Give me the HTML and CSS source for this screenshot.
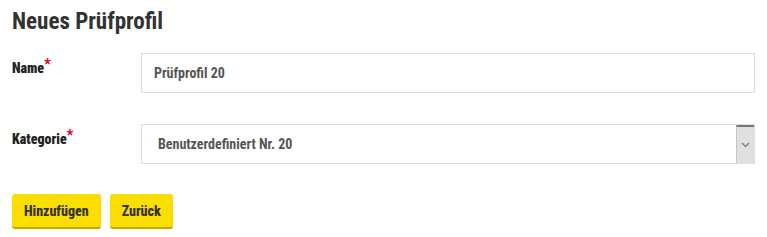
FILE: index.html
```html
<!DOCTYPE html>
<html>
    <head>
        <title>Neues Prüfprofil</title>
        <link rel="stylesheet" href="styles.css">
    </head>
    <body>
        <div class="container">
            <h1>Neues Prüfprofil</h1>
            <div class="form-row">
                <label for="name">Name<span class="required">*</span></label>
                <input type="text" id="name" value="Prüfprofil 20" />
            </div>
            <div class="form-row">
                <label for="category">Kategorie<span class="required">*</span></label>
                <div class="select-box">
                    <span class="select-value">Benutzerdefiniert Nr. 20</span>
                    <span class="select-arrow">
                        <svg width="9" height="6" viewBox="0 0 9 6"><path d="M1 1 L4.5 4.5 L8 1" fill="none" stroke="#777" stroke-width="1.2"/></svg>
                    </span>
                </div>
            </div>
            <div class="actions">
                <button class="btn">Hinzufügen</button>
                <button class="btn">Zurück</button>
            </div>
        </div>
    </body>
</html>
```

FILE: styles.css
```css
* {
    box-sizing: border-box;
}

body {
    font-family: 'Roboto Condensed', 'Liberation Sans Narrow', Roboto, Arial, sans-serif;
    font-stretch: 80%;
    margin: 0;
    padding: 0;
    color: #333;
    background: #fff;
}

.container {
    padding: 10px 12px 0 12px;
}

h1 {
    font-size: 23px;
    font-weight: bold;
    margin: 0 0 19px 0;
    line-height: 24px;
    color: #333;
}

.form-row {
    display: grid;
    grid-template-columns: 129px 614px;
    align-items: start;
    margin-bottom: 31px;
}

.form-row label {
    font-weight: 900;
    font-size: 14px;
    font-stretch: 85%;
    color: #222;
    padding-top: 7px;
}

.required {
    color: #e8001c;
    position: relative;
    top: -4px;
    font-size: 14px;
}

input[type="text"] {
    font-family: inherit;
    font-stretch: inherit;
    font-weight: bold;
    font-size: 14px;
    color: #555;
    height: 40px;
    padding: 0 12px;
    border: 1px solid #ddd;
    width: 100%;
    outline: none;
}

.select-box {
    display: flex;
    height: 40px;
    border: 1px solid #ddd;
}

.select-value {
    flex: 1;
    font-weight: bold;
    font-size: 14px;
    color: #555;
    padding-left: 16px;
    line-height: 38px;
}

.select-arrow {
    width: 18px;
    background: #e0e0e0;
    border-left: 1px solid #c6c6c6;
    border-top: 2px solid #777;
    display: flex;
    align-items: center;
    justify-content: center;
}

.actions {
    display: flex;
    gap: 9px;
    margin-top: -1px;
}

.btn {
    font-family: inherit;
    font-stretch: inherit;
    font-weight: 800;
    font-size: 14px;
    color: #333;
    background: #fbdd00;
    border: 0;
    border-bottom: 2px solid #c9a900;
    border-radius: 3px;
    height: 35px;
    padding: 0 12px;
}
```
